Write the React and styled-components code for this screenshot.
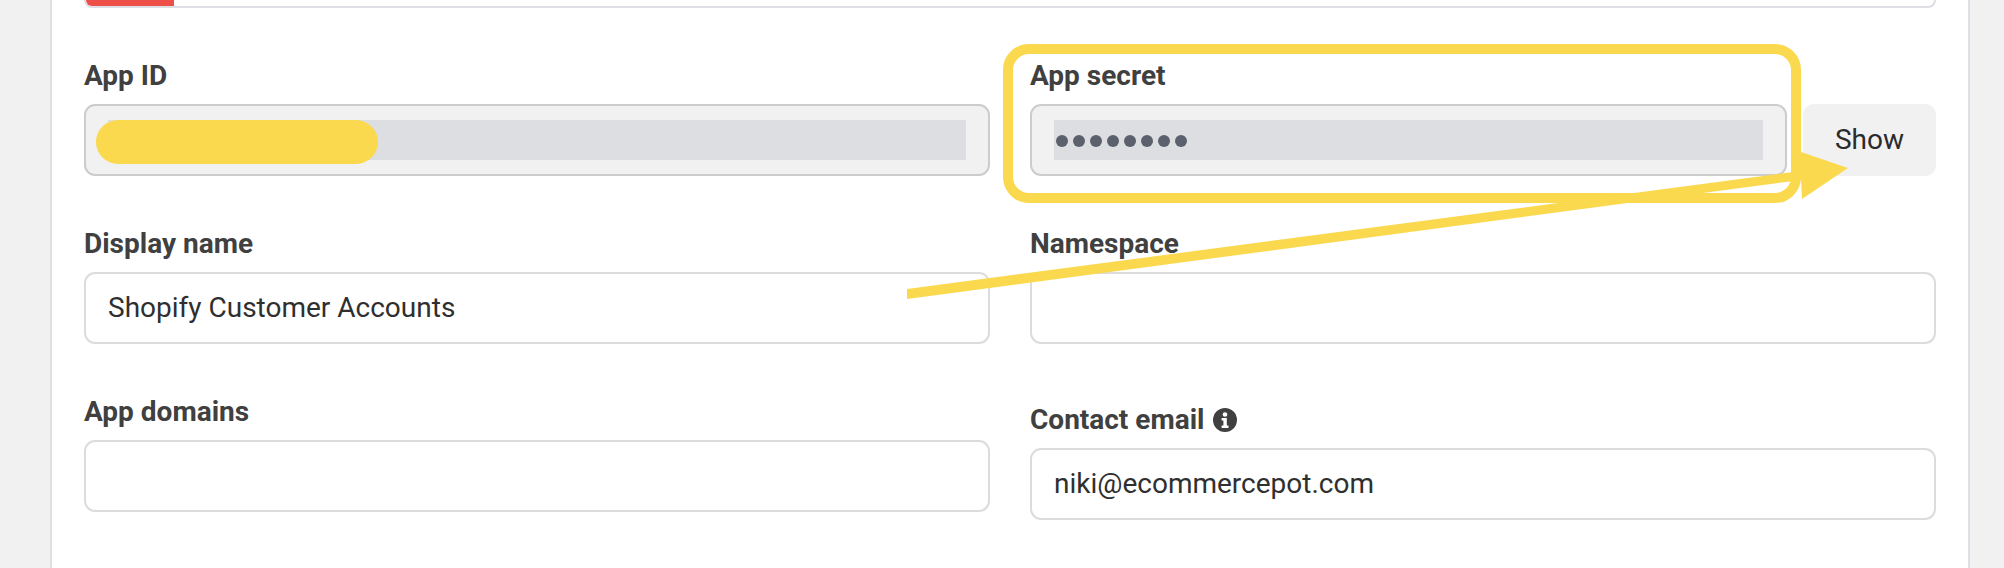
import React from 'react'
import styled, { createGlobalStyle } from 'styled-components'

const yellow = '#fad94f'

const GlobalStyle = createGlobalStyle`
    html, body {
        margin: 0;
        background: #f1f1f1;
    }
`

const Page = styled.div`
    position: relative;
    width: 2004px;
    height: 568px;
    overflow: hidden;
    background: #f1f1f1;
    font-family: Roboto, "Liberation Sans", sans-serif;
`

const Card = styled.div`
    box-sizing: border-box;
    width: 1920px;
    height: 568px;
    margin-left: 50px;
    padding: 0 32px;
    background: #fff;
    border-left: 2px solid #dddfe5;
    border-right: 2px solid #dddfe5;
`

const ColorBar = styled.div`
    box-sizing: border-box;
    height: 8px;
    overflow: hidden;
    border: 2px solid #dddfe5;
    border-top: 0;
    border-radius: 0 0 10px 10px;
`

const ColorFill = styled.div`
    width: 88px;
    height: 6px;
    background: #ee5049;
`

const Columns = styled.div`
    display: grid;
    grid-template-columns: 906px 906px;
    column-gap: 40px;
    padding-top: 96px;
`

const Column = styled.div`
    display: flex;
    flex-direction: column;
    min-width: 0;
`

const Field = styled.div`
    position: relative;
    margin-bottom: ${(p) => p.$gap}px;
`

const Label = styled.label`
    position: absolute;
    left: 0;
    bottom: 100%;
    display: flex;
    align-items: center;
    gap: 9px;
    margin-bottom: 13px;
    line-height: 30px;
    font-size: 28px;
    font-weight: 700;
    color: #404040;
    white-space: nowrap;
`

const InputRow = styled.div`
    display: flex;
    gap: 16px;
`

const Input = styled.div`
    position: relative;
    flex: 1;
    box-sizing: border-box;
    display: flex;
    align-items: center;
    height: 72px;
    padding: 0 22px;
    background: ${(p) => (p.$disabled ? '#f1f1f1' : '#fff')};
    border: 2px solid ${(p) => (p.$disabled ? '#cccccc' : '#dcdcdc')};
    border-radius: 11px;
    font-size: 28px;
    color: #2f2f2f;
    white-space: nowrap;
`

const Value = styled.span`
    margin-bottom: 2px;
`

const SelectionBar = styled.div`
    flex: 1;
    display: flex;
    align-items: center;
    gap: 5px;
    height: 40px;
    padding-left: 2px;
    background: #dddee1;
`

const Dot = styled.span`
    width: 12px;
    height: 12px;
    margin-top: 2px;
    border-radius: 50%;
    background: #5a606c;
`

const Redaction = styled.div`
    position: absolute;
    left: 10px;
    top: 14px;
    width: 282px;
    height: 44px;
    border-radius: 22px;
    background: ${yellow};
`

const ShowButton = styled.button`
    box-sizing: border-box;
    width: 133px;
    height: 72px;
    padding: 0 0 2px;
    border: 0;
    border-radius: 11px;
    background: #f1f1f2;
    font-family: inherit;
    font-size: 28px;
    color: #2b2b2b;
`

const Highlight = styled.div`
    position: absolute;
    left: -29px;
    top: -62px;
    box-sizing: border-box;
    width: 798px;
    height: 159px;
    border: 10px solid ${yellow};
    border-radius: 26px;
    pointer-events: none;
`

const Arrow = styled.svg`
    position: absolute;
    left: 0;
    top: 0;
    pointer-events: none;
`

const InfoIcon = () => (
    <svg width="24" height="24" viewBox="0 0 24 24">
        <circle cx="12" cy="12" r="12" fill="#404040" />
        <circle cx="12" cy="6.5" r="2.3" fill="#fff" />
        <path d="M8.6 10h5.2v7.4h1.7V20H8.6v-2.6h1.8v-4.8H8.6z" fill="#fff" />
    </svg>
)

const App = () => (
    <Page>
        <GlobalStyle />
        <Card>
            <ColorBar>
                <ColorFill />
            </ColorBar>
            <Columns>
                <Column>
                    <Field $gap={96}>
                        <Label>App ID</Label>
                        <Input $disabled>
                            <SelectionBar />
                            <Redaction />
                        </Input>
                    </Field>
                    <Field $gap={96}>
                        <Label>Display name</Label>
                        <Input>
                            <Value>Shopify Customer Accounts</Value>
                        </Input>
                    </Field>
                    <Field $gap={0}>
                        <Label>App domains</Label>
                        <Input />
                    </Field>
                </Column>
                <Column>
                    <Field $gap={96}>
                        <Label>App secret</Label>
                        <InputRow>
                            <Input $disabled>
                                <SelectionBar>
                                    {Array.from({ length: 8 }, (_, i) => (
                                        <Dot key={i} />
                                    ))}
                                </SelectionBar>
                                <Highlight />
                            </Input>
                            <ShowButton>Show</ShowButton>
                        </InputRow>
                    </Field>
                    <Field $gap={104}>
                        <Label>Namespace</Label>
                        <Input />
                    </Field>
                    <Field $gap={0}>
                        <Label>
                            Contact email
                            <InfoIcon />
                        </Label>
                        <Input>
                            <Value>niki@ecommercepot.com</Value>
                        </Input>
                    </Field>
                </Column>
            </Columns>
        </Card>
        <Arrow width="2004" height="568" viewBox="0 0 2004 568">
            <path d="M907 289L1800 171L1801 152L1848 168L1802 199L1801 180L907 299z" fill={yellow} />
        </Arrow>
    </Page>
)

export default App
